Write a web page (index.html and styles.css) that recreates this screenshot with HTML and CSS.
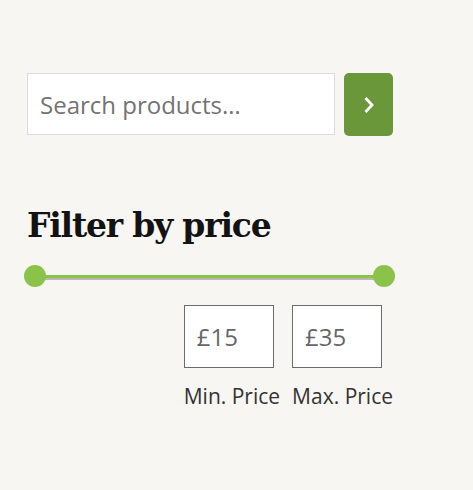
FILE: index.html
```html
<!DOCTYPE html>
<html lang="en">
<head>
<meta charset="utf-8">
<title>Shop sidebar</title>
<link rel="stylesheet" href="styles.css">
</head>
<body>
<aside class="sidebar">
  <form class="search" role="search">
    <input class="search-input" type="search" placeholder="Search products…" aria-label="Search products">
    <button class="search-btn" type="submit" aria-label="Search">
      <svg width="12" height="18" viewBox="0 0 12 18" aria-hidden="true"><path d="M2.5 2 L9 9 L2.5 16" fill="none" stroke="#fff" stroke-width="2.8" stroke-linecap="butt" stroke-linejoin="miter"/></svg>
    </button>
  </form>

  <section class="filter">
    <h2 class="filter-title">Filter by price</h2>
    <div class="slider">
      <span class="handle"></span>
      <span class="track"></span>
      <span class="handle"></span>
    </div>
    <div class="prices">
      <label class="price">
        <input class="price-input" type="text" value="£15">
        <span class="price-label">Min. Price</span>
      </label>
      <label class="price">
        <input class="price-input" type="text" value="£35">
        <span class="price-label">Max. Price</span>
      </label>
    </div>
  </section>
</aside>
</body>
</html>
```

FILE: styles.css
```css
html, body {
  margin: 0;
  padding: 0;
  background: #f7f6f2;
}

body {
  font-family: "Open Sans", "Liberation Sans", sans-serif;
  color: #333;
}

.sidebar {
  width: 368px;
  padding: 73px 0 0 27px;
}

.search {
  display: flex;
  gap: 9px;
  margin: 0;
}

.search-input {
  box-sizing: border-box;
  width: 308px;
  height: 62px;
  margin: 0;
  padding: 0 12px;
  border: 1px solid #dcdcdc;
  border-radius: 0;
  background: #fff;
  font-family: "Open Sans", sans-serif;
  font-size: 24px;
  color: #555;
  outline: none;
  -webkit-appearance: none;
  appearance: none;
}

.search-input::placeholder {
  color: #737373;
  opacity: 1;
}

.search-btn {
  box-sizing: border-box;
  width: 49px;
  height: 63px;
  margin: 0;
  padding: 0;
  border: 0;
  border-radius: 5px;
  background: #6a9739;
  display: flex;
  align-items: center;
  justify-content: center;
  cursor: pointer;
}

.filter {
  margin-top: 70px;
}

.filter-title {
  margin: 0;
  font-family: "DejaVu Serif", "Liberation Serif", serif;
  font-weight: bold;
  font-size: 33px;
  letter-spacing: -1.2px;
  line-height: 40px;
  color: #131313;
}

.slider {
  display: flex;
  align-items: center;
  width: 371px;
  margin: 19px 0 0 -3px;
}

.handle {
  flex: none;
  width: 22px;
  height: 22px;
  border-radius: 50%;
  background: #8bc34a;
  position: relative;
  z-index: 1;
}

.track {
  flex: 1;
  height: 3px;
  margin: 0 -11px;
  background: #8bc34a;
  box-shadow: 0 2px 0 #b9b9b0;
}

.prices {
  display: flex;
  justify-content: flex-end;
  gap: 12px;
  margin-top: 18px;
  padding-right: 2px;
}

.price {
  display: flex;
  flex-direction: column;
  align-items: flex-start;
}

.price-input {
  box-sizing: border-box;
  width: 90px;
  height: 63px;
  margin: 0;
  padding: 0 12px;
  border: 1px solid #6b6b6b;
  border-radius: 0;
  background: #fff;
  font-family: "Open Sans", sans-serif;
  font-size: 24px;
  color: #666;
  outline: none;
}

.price-label {
  margin-top: 14px;
  font-size: 21px;
  line-height: 28px;
  color: #333;
}
```
